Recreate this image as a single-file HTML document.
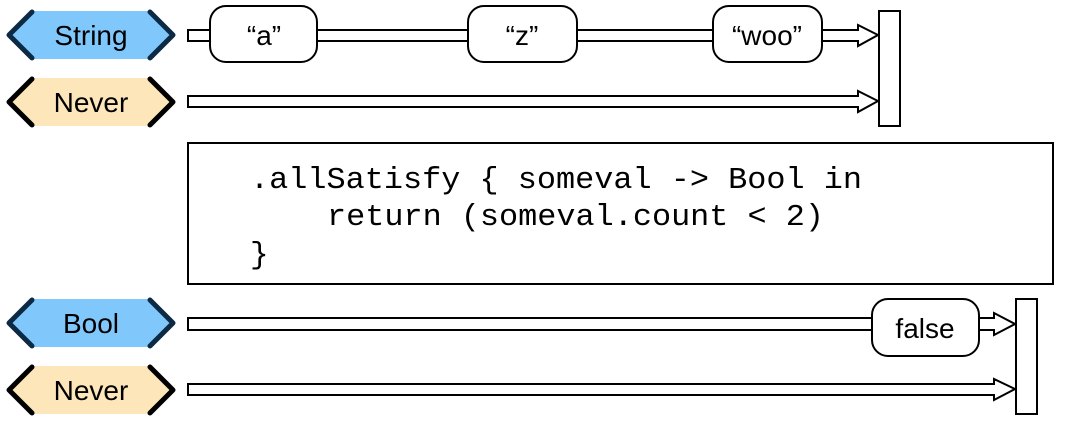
<!DOCTYPE html>
<html><head><style>html,body{margin:0;padding:0;background:#fff;width:1074px;height:428px;overflow:hidden}</style></head><body>
<svg width="1074" height="428" viewBox="0 0 1074 428" xmlns="http://www.w3.org/2000/svg">
<defs>
<g id="blue">
<polygon points="8,0 32,-24 150,-24 174,0 150,24 32,24" fill="#80c8fc"/>
<polyline points="32,-23 9,0 32,23" fill="none" stroke="#0d2a44" stroke-width="5" stroke-linecap="round" stroke-linejoin="round"/>
<polyline points="150,-23 173,0 150,23" fill="none" stroke="#0d2a44" stroke-width="5" stroke-linecap="round" stroke-linejoin="round"/>
</g>
<g id="beige">
<polygon points="8,0 32,-24 150,-24 174,0 150,24 32,24" fill="#fde6b9"/>
<polyline points="32,-23 9,0 32,23" fill="none" stroke="#000" stroke-width="5" stroke-linecap="round" stroke-linejoin="round"/>
<polyline points="150,-23 173,0 150,23" fill="none" stroke="#000" stroke-width="5" stroke-linecap="round" stroke-linejoin="round"/>
</g>
</defs>
<g font-family="Liberation Sans, sans-serif" font-size="28" text-anchor="middle" fill="#000">
<use href="#blue" y="35"/><text x="91" y="45">String</text>
<polygon points="188,30 858,30 858,25 878,35 858,46 858,41 188,41" fill="#fff" stroke="#000" stroke-width="2"/>
<rect x="210" y="6" width="107" height="56" rx="16" fill="#fff" stroke="#000" stroke-width="2"/><text x="264" y="45">“a”</text>
<rect x="468" y="6" width="109" height="56" rx="16" fill="#fff" stroke="#000" stroke-width="2"/><text x="522" y="45">“z”</text>
<rect x="713" y="6" width="109" height="56" rx="16" fill="#fff" stroke="#000" stroke-width="2"/><text x="767" y="45">“woo”</text>
<use href="#beige" y="102"/><text x="91" y="112">Never</text>
<polygon points="188,96 858,96 858,91 878,101 858,112 858,107 188,107" fill="#fff" stroke="#000" stroke-width="2"/>
<rect x="879" y="11" width="21" height="115" fill="#fff" stroke="#000" stroke-width="2"/>
<rect x="188" y="143" width="865" height="141" fill="#fff" stroke="#000" stroke-width="2"/>
<g font-family="Liberation Mono, monospace" font-size="31" text-anchor="start">
<text x="250" y="188" textLength="612" lengthAdjust="spacingAndGlyphs">.allSatisfy { someval -&gt; Bool in</text>
<text x="327" y="225" textLength="497" lengthAdjust="spacingAndGlyphs">return (someval.count &lt; 2)</text>
<text x="250" y="263">}</text>
</g>
<use href="#blue" y="323"/><text x="91" y="333">Bool</text>
<polygon points="188,318 994,318 994,313 1015,324 994,335 994,330 188,330" fill="#fff" stroke="#000" stroke-width="2"/>
<rect x="872" y="299" width="107" height="57" rx="16" fill="#fff" stroke="#000" stroke-width="2"/><text x="925" y="338">false</text>
<use href="#beige" y="390"/><text x="91" y="400">Never</text>
<polygon points="188,384 994,384 994,379 1015,389 994,400 994,395 188,395" fill="#fff" stroke="#000" stroke-width="2"/>
<rect x="1016" y="299" width="21" height="115" fill="#fff" stroke="#000" stroke-width="2"/>
</g>
</svg>
</body></html>
